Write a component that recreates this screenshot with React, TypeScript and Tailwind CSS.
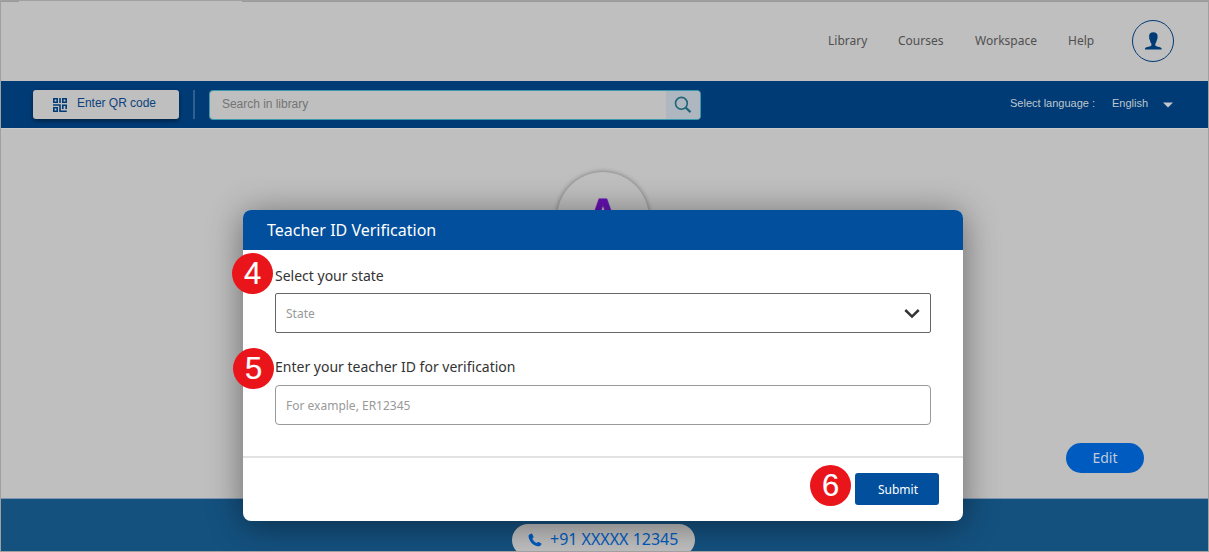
import React from "react";

const noto = "font-['Noto_Sans',sans-serif]";
const arial = "font-['Liberation_Sans',sans-serif]";

function QrIcon() {
  return (
    <svg width="14" height="14" viewBox="0 0 14 14" fill="none" stroke="#003b76" strokeWidth="1.6">
      <path d="M.8 .8h3.400v3.400H.8zM9.800 .8h3.400v3.400H9.800zM.8 9.800h3.400v3.400H.8z" />
      <path d="M7 0v5M0 7h7v6.200h6.800M9.800 11V7.300h3.400V11" />
    </svg>
  );
}

function Badge({ label, place }: { label: string; place: string }) {
  return (
    <span
      className={`absolute flex size-[41px] items-center justify-center rounded-full bg-[#e9151b] text-[31px] leading-none text-white [-webkit-text-stroke:0.2px_white] ${arial} ${place}`}
    >
      {label}
    </span>
  );
}

function TopNav() {
  return (
    <header className={`flex h-[81px] shrink-0 justify-end pr-[35px] pt-5 text-[12px] text-[#4f4f4f] ${noto}`}>
      <nav className="flex h-[42px] items-center gap-[31px]">
        <span className="w-[39px] whitespace-nowrap">Library</span>
        <span className="w-[46px] whitespace-nowrap">Courses</span>
        <span className="w-[62px] whitespace-nowrap">Workspace</span>
        <span className="w-[26px] whitespace-nowrap">Help</span>
      </nav>
      <span className="ml-[38px] flex size-[42px] items-center justify-center rounded-full border border-[#003b76]">
        <svg width="18" height="18" viewBox="0 0 18 18" fill="#003b76">
          <path d="M9.300 .3C6.700 .3 5.100 1.800 5.100 4.100c0 .8.100 1.300.2 1.700-.3.600.1 1.900.6 2.200.3 1.700.8 3 1.500 3.800v1.600c0 .9-5.300 1.300-6.400 2.800v1.200h16.600v-1.200c-1.100-1.500-6.300-1.900-6.300-2.800v-1.600c.7-.8 1.200-2.100 1.500-3.800.5-.3.900-1.600.6-2.200.1-.4.200-.9.200-1.700C13.600 1.800 11.900 .3 9.300 .3z" />
        </svg>
      </span>
    </header>
  );
}

function SearchBar() {
  return (
    <div className={`flex h-[47px] shrink-0 items-start bg-[#003b76] pl-[33px] pt-[9px] ${arial}`}>
      <button className="flex h-[29px] w-[146px] items-center rounded-[3px] bg-[#bfbfbf] pl-5 shadow-[0_2px_4px_rgba(0,0,0,0.45)]">
        <QrIcon />
        <span className="ml-[10px] whitespace-nowrap pb-[3px] text-[12px] tracking-[-0.03px] text-[#0b427d]">Enter QR code</span>
      </button>
      <div className="ml-[14px] h-[29px] w-[2px] bg-[#315f8f]" />
      <div className="ml-[14px] flex h-[30px] w-[492px] overflow-hidden rounded-[4px] border border-[#3c98ad] bg-[#bfbfbf]">
        <span className="flex-1 pl-3 text-[12px] leading-[27px] tracking-[-0.03px] text-[#747474]">Search in library</span>
        <span className="flex w-[34px] items-center justify-center bg-[#aeb7bf]">
          <svg width="18" height="18" viewBox="0 0 18 18" fill="none" stroke="#1e6577">
            <circle cx="7.400" cy="7.300" r="5.900" strokeWidth="1.6" />
            <path d="M11.600 11.500l4.900 4.600" strokeWidth="2.200" />
          </svg>
        </span>
      </div>
      <div className="ml-auto flex h-[27px] items-center pr-9 text-[11px] text-[#bfc6cd]">
        <span className="w-[102px] whitespace-nowrap">Select language :</span>
        <span className="w-[51px]">English</span>
        <svg className="mt-[2px]" width="10" height="6" viewBox="0 0 10 6" fill="#c4c8cc">
          <path d="M0 .5h10L5 5.600z" />
        </svg>
      </div>
    </div>
  );
}

function Profile() {
  return (
    <main className="flex h-[370px] shrink-0 flex-col items-center overflow-hidden border-t border-[#cacaca] pt-[43px]">
      <div className={`mr-[3px] flex size-[92px] items-center justify-center rounded-full bg-[#bfbfbf] pb-[6px] text-[44px] font-bold text-[#6610b2] shadow-[0_0_5px_rgba(0,0,0,0.4)] [-webkit-text-stroke:1px_#6610b2] ${arial}`}>
        A
      </div>
      <button className={`mr-[65px] mt-[179px] h-[30px] w-[78px] self-end rounded-full bg-[#005bc0] pb-[2px] text-[14px] text-[#bfcbdc] ${noto}`}>
        Edit
      </button>
    </main>
  );
}

function Footer() {
  return (
    <footer className="flex flex-1 justify-center overflow-hidden border-t border-[#7e96b2] bg-[#14517f] pt-[25px]">
      <div className={`-ml-[2px] flex h-8 w-[183px] shrink-0 items-center rounded-full bg-[#bfbfbf] pb-[2px] pl-4 text-[#005bc0] ${noto}`}>
        <svg className="mt-px" width="14" height="14" viewBox="0 0 14 14" fill="currentColor">
          <path d="M3.200.7 1.300 1.600C.2 2.200.5 4.200 1.200 5.900c1.200 3.100 3.500 5.700 6.600 6.800 1.800.6 3.400.9 4.200.2l1.300-1.400c.3-.5.2-.9-.2-1.200L10.600 9c-.4-.2-.8-.1-1.100.2l-.9.9C6.800 9.300 5 7.400 4.300 5.500l.9-.8c.3-.3.400-.6.300-1L4.300 1.100C4.100.7 3.700.5 3.200.7z" />
        </svg>
        <span className="ml-2 whitespace-nowrap text-[16px]">+91 XXXXX 12345</span>
      </div>
    </footer>
  );
}

function VerificationDialog() {
  return (
    <section className={`absolute left-[243px] top-[210px] h-[311px] w-[720px] rounded-[8px] bg-white shadow-[0_4px_35px_rgba(0,0,0,0.45)] ${noto}`}>
      <h1 className="h-10 rounded-t-[8px] bg-[#024f9d] pl-6 text-[16px] leading-10 text-white">Teacher ID Verification</h1>
      <div className="flex h-[206px] flex-col px-8 pt-4 text-[14px] leading-5 text-[#333]">
        <span>Select your state</span>
        <div className="mt-[7px] flex h-10 items-center justify-between rounded-[2px] border border-[#666] pl-[10px] pr-[10px] pt-[2px] text-[12px] text-[#999]">
          State
          <svg width="16" height="12" viewBox="0 0 16 12" fill="none" stroke="#333" strokeWidth="2.5">
            <path d="M1.300 2 8 8.600 14.700 2" />
          </svg>
        </div>
        <span className="mt-6">Enter your teacher ID for verification</span>
        <div className="mt-2 flex h-10 items-center rounded-[4px] border border-[#999] pl-[10px] pt-[2px] text-[12px] text-[#999]">
          For example, ER12345
        </div>
      </div>
      <div className="flex justify-end border-t-2 border-[#e2e2e2] pr-6 pt-[15px]">
        <button className="h-8 w-[84px] rounded-[3px] bg-[#024f9d] pl-[2px] pt-[2px] text-[12px] text-white">Submit</button>
      </div>
      <Badge label="4" place="-left-[11px] top-[43px]" />
      <Badge label="5" place="-left-[10px] top-[138px]" />
      <Badge label="6" place="left-[567px] top-[255px]" />
    </section>
  );
}

export default function App() {
  return (
    <div className="relative flex h-[552px] w-[1209px] flex-col overflow-hidden bg-[#bfbfbf]">
      <TopNav />
      <SearchBar />
      <Profile />
      <Footer />
      <VerificationDialog />
      <div className="pointer-events-none absolute inset-0 border border-[#a0a0a0]">
        <div className="flex h-px justify-between">
          <span className="w-[18px] bg-[#9a9a9a]" />
          <span className="w-[966px] bg-[#9a9a9a]" />
        </div>
      </div>
    </div>
  );
}
